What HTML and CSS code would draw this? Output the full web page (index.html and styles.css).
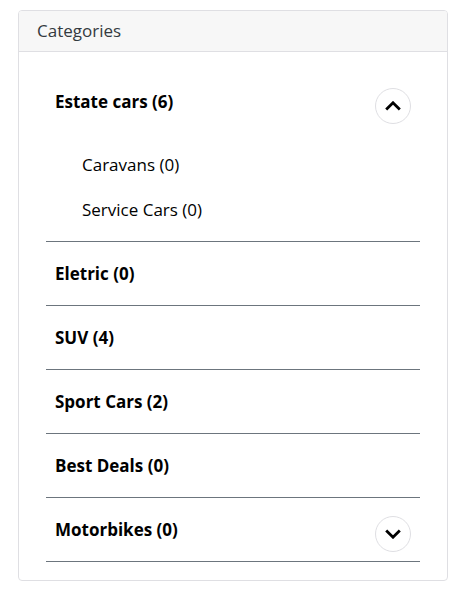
FILE: index.html
```html
<!DOCTYPE html>
<html lang="en">
<head>
    <meta charset="UTF-8">
    <title>Categories</title>
    <link rel="stylesheet" href="styles.css">
</head>
<body>
    <div class="card">
        <div class="card-header">Categories</div>
        <ul class="cats">
            <li class="cat">
                <div class="cat-row">
                    <span class="cat-name">Estate cars (6)</span>
                    <button class="toggle" type="button">
                        <svg width="16" height="10" viewBox="0 0 16 10"><path d="M1.2 8.6 8 1.8l6.8 6.8" fill="none" stroke="#000" stroke-width="2.8"/></svg>
                    </button>
                </div>
                <ul class="subcats">
                    <li>Caravans (0)</li>
                    <li>Service Cars (0)</li>
                </ul>
            </li>
            <li class="cat"><div class="cat-row"><span class="cat-name">Eletric (0)</span></div></li>
            <li class="cat"><div class="cat-row"><span class="cat-name">SUV (4)</span></div></li>
            <li class="cat"><div class="cat-row"><span class="cat-name">Sport Cars (2)</span></div></li>
            <li class="cat"><div class="cat-row"><span class="cat-name">Best Deals (0)</span></div></li>
            <li class="cat">
                <div class="cat-row">
                    <span class="cat-name">Motorbikes (0)</span>
                    <button class="toggle" type="button">
                        <svg width="16" height="10" viewBox="0 0 16 10"><path d="M1.2 1.4 8 8.2l6.8-6.8" fill="none" stroke="#000" stroke-width="2.8"/></svg>
                    </button>
                </div>
            </li>
        </ul>
    </div>
</body>
</html>
```

FILE: styles.css
```css
*{
    margin: 0;
    padding: 0;
    box-sizing: border-box;
}
ul{
    list-style: none;
}
body{
    padding: 10px 18px;
    background: #fff;
    color: #000;
    font-family: "Open Sans", "Noto Sans", sans-serif;
    font-size: 17px;
}
.card{
    width: 430px;
    border: 1px solid #dfdfe3;
    border-radius: 4px;
    background: #fff;
}
.card-header{
    height: 41px;
    padding: 0 18px;
    line-height: 40px;
    color: #343a40;
    background: #f7f7f7;
    border-bottom: 1px solid #dfdfe3;
    border-radius: 3px 3px 0 0;
}
.cats{
    padding: 18px 27px 18px;
}
.cat{
    border-bottom: 1px solid #6c757d;
    padding-top: 18px;
}
.cat-row{
    display: flex;
    justify-content: space-between;
    align-items: flex-start;
    min-height: 45px;
    padding: 0 9px;
}
.cat-name{
    font-weight: 700;
    line-height: 28px;
}
.toggle{
    width: 36px;
    height: 36px;
    display: flex;
    align-items: center;
    justify-content: center;
    background: #fff;
    border: 1px solid #dfdfe3;
    border-radius: 50%;
}
.subcats{
    padding: 9px 0 9px 36px;
}
.subcats li{
    height: 45px;
    line-height: 45px;
}
```
